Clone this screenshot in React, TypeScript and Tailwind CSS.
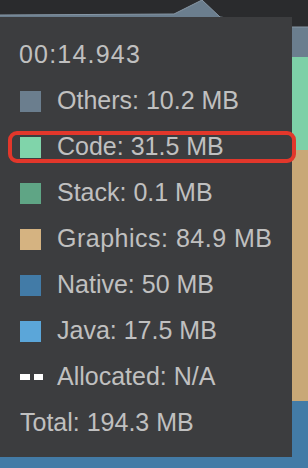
const ROWS = [
  { label: 'Others: 10.2 MB', color: 'bg-[#6b7e8e]' },
  { label: 'Code: 31.5 MB', color: 'bg-[#80d4aa]' },
  { label: 'Stack: 0.1 MB', color: 'bg-[#5fa585]' },
  { label: 'Graphics: 84.9 MB', color: 'bg-[#d5b381]' },
  { label: 'Native: 50 MB', color: 'bg-[#427ba7]' },
  { label: 'Java: 17.5 MB', color: 'bg-[#5ba6d9]' },
];

function Chart() {
  // stacked memory areas behind the tooltip
  return (
    <svg className="absolute inset-0" width="308" height="468" viewBox="0 0 308 468">
      <path d="M0 15 L174 14 L202 0 L220 17 L292 27 L308 27 L308 468 L0 468 Z" fill="#6b7e8e" />
      <path d="M0 15 L174 14 L202 0 L220 17 L292 27 L308 27" fill="none" stroke="#8797a5" strokeWidth="1" />
      <rect x="0" y="57" width="308" height="411" fill="#7dd0a7" />
      <rect x="0" y="150" width="308" height="318" fill="#c8a877" />
      <rect x="0" y="401" width="308" height="67" fill="#437ba6" />
    </svg>
  );
}

export default function App() {
  return (
    <div className="relative w-[308px] h-[468px] overflow-hidden bg-[#2a2b2d] font-['Liberation_Sans',Arial,sans-serif]">
      <Chart />
      <div className="relative mt-[17px] w-[292px] h-[440px] bg-[#3c3d3f] pt-[15px] pl-5 text-[25px] text-[#c0c0c0]">
        <div className="h-[46px] flex items-center -ml-px tracking-[1.2px]">00:14.943</div>
        {ROWS.map((r) => (
          <div key={r.label} className="h-[46px] flex items-center gap-4">
            <span className={`w-[21px] h-[21px] shrink-0 ${r.color}`} />
            <span className={r.label.startsWith('Graphics') ? 'tracking-[0.5px]' : ''}>{r.label}</span>
          </div>
        ))}
        <div className="h-[46px] flex items-center gap-4">
          <span className="w-[23px] h-[21px] shrink-0 flex items-center gap-[4px]">
            <span className="w-[11px] h-[6px] bg-white" />
            <span className="w-[9px] h-[6px] bg-white" />
          </span>
          <span className="-ml-[2px]">Allocated: N/A</span>
        </div>
        <div className="h-[46px] flex items-center">Total: 194.3 MB</div>
      </div>
      <div className="absolute left-[8px] top-[131px] w-[288px] h-[32px] rounded-[9px] border-[4px] border-[#e2372b]" />
    </div>
  );
}
